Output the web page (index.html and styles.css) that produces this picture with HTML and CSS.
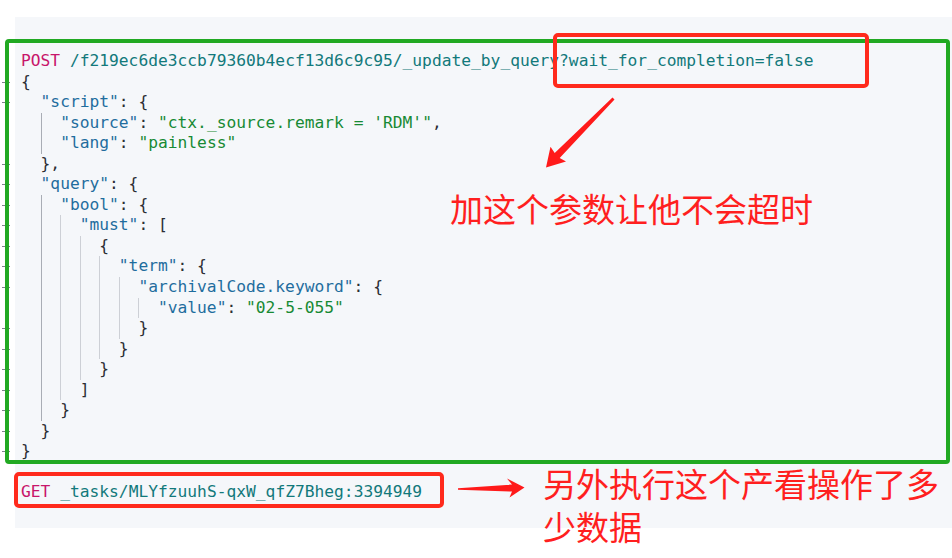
FILE: index.html
```html
<!DOCTYPE html>
<html lang="zh">
<head>
<meta charset="utf-8">
<title>Console</title>
<link rel="stylesheet" href="styles.css">
</head>
<body>
<div class="page">
  <div class="editor">
    <div class="gutter">
      <div class="fl"></div>
      <div class="fl m"></div>
      <div class="fl m"></div>
      <div class="fl"></div>
      <div class="fl"></div>
      <div class="fl m"></div>
      <div class="fl m"></div>
      <div class="fl m"></div>
      <div class="fl m"></div>
      <div class="fl m"></div>
      <div class="fl m"></div>
      <div class="fl m"></div>
      <div class="fl"></div>
      <div class="fl m"></div>
      <div class="fl m"></div>
      <div class="fl m"></div>
      <div class="fl m"></div>
      <div class="fl m"></div>
      <div class="fl m"></div>
      <div class="fl m"></div>
    </div>
    <div class="code">
      <div class="ln"><span class="m">POST</span><span class="u"> /f219ec6de3ccb79360b4ecf13d6c9c95/_update_by_query?wait_for_completion=false</span></div>
      <div class="ln"><span class="p">{</span></div>
      <div class="ln"><span class="ind"></span><span class="k">"script"</span><span class="p">: {</span></div>
      <div class="ln"><span class="ind"></span><span class="ind g1"></span><span class="k">"source"</span><span class="p">: </span><span class="s">"ctx._source.remark = 'RDM'"</span><span class="p">,</span></div>
      <div class="ln"><span class="ind"></span><span class="ind g1"></span><span class="k">"lang"</span><span class="p">: </span><span class="s">"painless"</span></div>
      <div class="ln"><span class="ind"></span><span class="p">},</span></div>
      <div class="ln"><span class="ind"></span><span class="k">"query"</span><span class="p">: {</span></div>
      <div class="ln"><span class="ind"></span><span class="ind g1"></span><span class="k">"bool"</span><span class="p">: {</span></div>
      <div class="ln"><span class="ind"></span><span class="ind g1"></span><span class="ind g"></span><span class="k">"must"</span><span class="p">: [</span></div>
      <div class="ln"><span class="ind"></span><span class="ind g1"></span><span class="ind g"></span><span class="ind g"></span><span class="p">{</span></div>
      <div class="ln"><span class="ind"></span><span class="ind g1"></span><span class="ind g"></span><span class="ind g"></span><span class="ind g"></span><span class="k">"term"</span><span class="p">: {</span></div>
      <div class="ln"><span class="ind"></span><span class="ind g1"></span><span class="ind g"></span><span class="ind g"></span><span class="ind g"></span><span class="ind g"></span><span class="k">"archivalCode.keyword"</span><span class="p">: {</span></div>
      <div class="ln"><span class="ind"></span><span class="ind g1"></span><span class="ind g"></span><span class="ind g"></span><span class="ind g"></span><span class="ind g"></span><span class="ind g"></span><span class="k">"value"</span><span class="p">: </span><span class="s">"02-5-055"</span></div>
      <div class="ln"><span class="ind"></span><span class="ind g1"></span><span class="ind g"></span><span class="ind g"></span><span class="ind g"></span><span class="ind g"></span><span class="p">}</span></div>
      <div class="ln"><span class="ind"></span><span class="ind g1"></span><span class="ind g"></span><span class="ind g"></span><span class="ind g"></span><span class="p">}</span></div>
      <div class="ln"><span class="ind"></span><span class="ind g1"></span><span class="ind g"></span><span class="ind g"></span><span class="p">}</span></div>
      <div class="ln"><span class="ind"></span><span class="ind g1"></span><span class="ind g"></span><span class="p">]</span></div>
      <div class="ln"><span class="ind"></span><span class="ind g1"></span><span class="p">}</span></div>
      <div class="ln"><span class="ind"></span><span class="p">}</span></div>
      <div class="ln"><span class="p">}</span></div>
      <div class="ln"></div>
      <div class="ln"><span class="m">GET</span><span class="u"> _tasks/MLYfzuuhS-qxW_qfZ7Bheg:3394949</span></div>
    </div>
  </div>

  <div class="box-green"></div>
  <div class="box-red box-red-top"></div>
  <div class="box-red box-red-bottom"></div>

  <svg class="arrows" width="952" height="558" viewBox="0 0 952 558" xmlns="http://www.w3.org/2000/svg">
    <polygon fill="#ff1a1a" points="614.5,99.5 559.7,158.1 566,161.5 546,167.5 550.5,146.8 554.7,153.1 612.5,97.5"/>
    <polygon fill="#ff1a1a" points="458,488.3 512,484.6 507,478.5 524.5,487.4 509.5,497.5 512,491.6 458,489.8"/>
  </svg>

  <div class="note note-top">加这个参数让他不会超时</div>
  <div class="note note-bottom">另外执行这个产看操作了多<br>少数据</div>
</div>
</body>
</html>
```

FILE: styles.css
```css
html, body {
  margin: 0;
  padding: 0;
  background: #ffffff;
}

.page {
  position: relative;
  width: 952px;
  height: 558px;
  overflow: hidden;
}

.editor {
  display: flex;
  margin-top: 17px;
  height: 511px;
}

.gutter {
  width: 15px;
  flex: none;
  padding-top: 34px;
  box-sizing: border-box;
}

.fl {
  position: relative;
  height: 20.55px;
}

.fl.m::before {
  content: "";
  position: absolute;
  left: 2px;
  top: 10px;
  width: 8px;
  height: 1px;
  background: #7d828b;
}

.fl.m::after {
  content: "";
  position: absolute;
  left: 5px;
  top: 8px;
  width: 1px;
  height: 5px;
  background: #7d828b;
}

.code {
  flex: 1;
  background: #f5f7fa;
  padding: 34px 0 0 6px;
  font-family: "DejaVu Sans Mono", monospace;
  font-size: 16.25px;
  color: #2b2d33;
}

.ln {
  display: flex;
  height: 20.55px;
  line-height: 20.55px;
  white-space: pre;
}

.ind {
  flex: none;
  width: 2ch;
  box-sizing: border-box;
}

.ind.g1 {
  border-left: 1px solid #a9adb5;
}

.ind.g {
  border-left: 1px solid #cdd0d6;
}

.m { color: #c8156a; }
.u { color: #12797b; }
.k { color: #1f6d9e; }
.s { color: #178a34; }
.p { color: #2b2d33; }

.box-green {
  position: absolute;
  left: 5px;
  top: 39px;
  width: 945px;
  height: 425px;
  box-sizing: border-box;
  border: 4px solid #21a922;
  border-radius: 4px;
}

.box-red {
  position: absolute;
  box-sizing: border-box;
  border: 4px solid #ff2a1c;
  border-radius: 5px;
}

.box-red-top {
  left: 553px;
  top: 33px;
  width: 316px;
  height: 55px;
}

.box-red-bottom {
  left: 14px;
  top: 472px;
  width: 430px;
  height: 36px;
}

.arrows {
  position: absolute;
  left: 0;
  top: 0;
}

.note {
  position: absolute;
  font-family: "Noto Sans CJK SC", sans-serif;
  font-size: 33px;
  color: #ff1f1f;
  white-space: nowrap;
}

.note-top {
  left: 450px;
  top: 192px;
  line-height: 33px;
}

.note-bottom {
  left: 543px;
  top: 462px;
  line-height: 43px;
}
```
